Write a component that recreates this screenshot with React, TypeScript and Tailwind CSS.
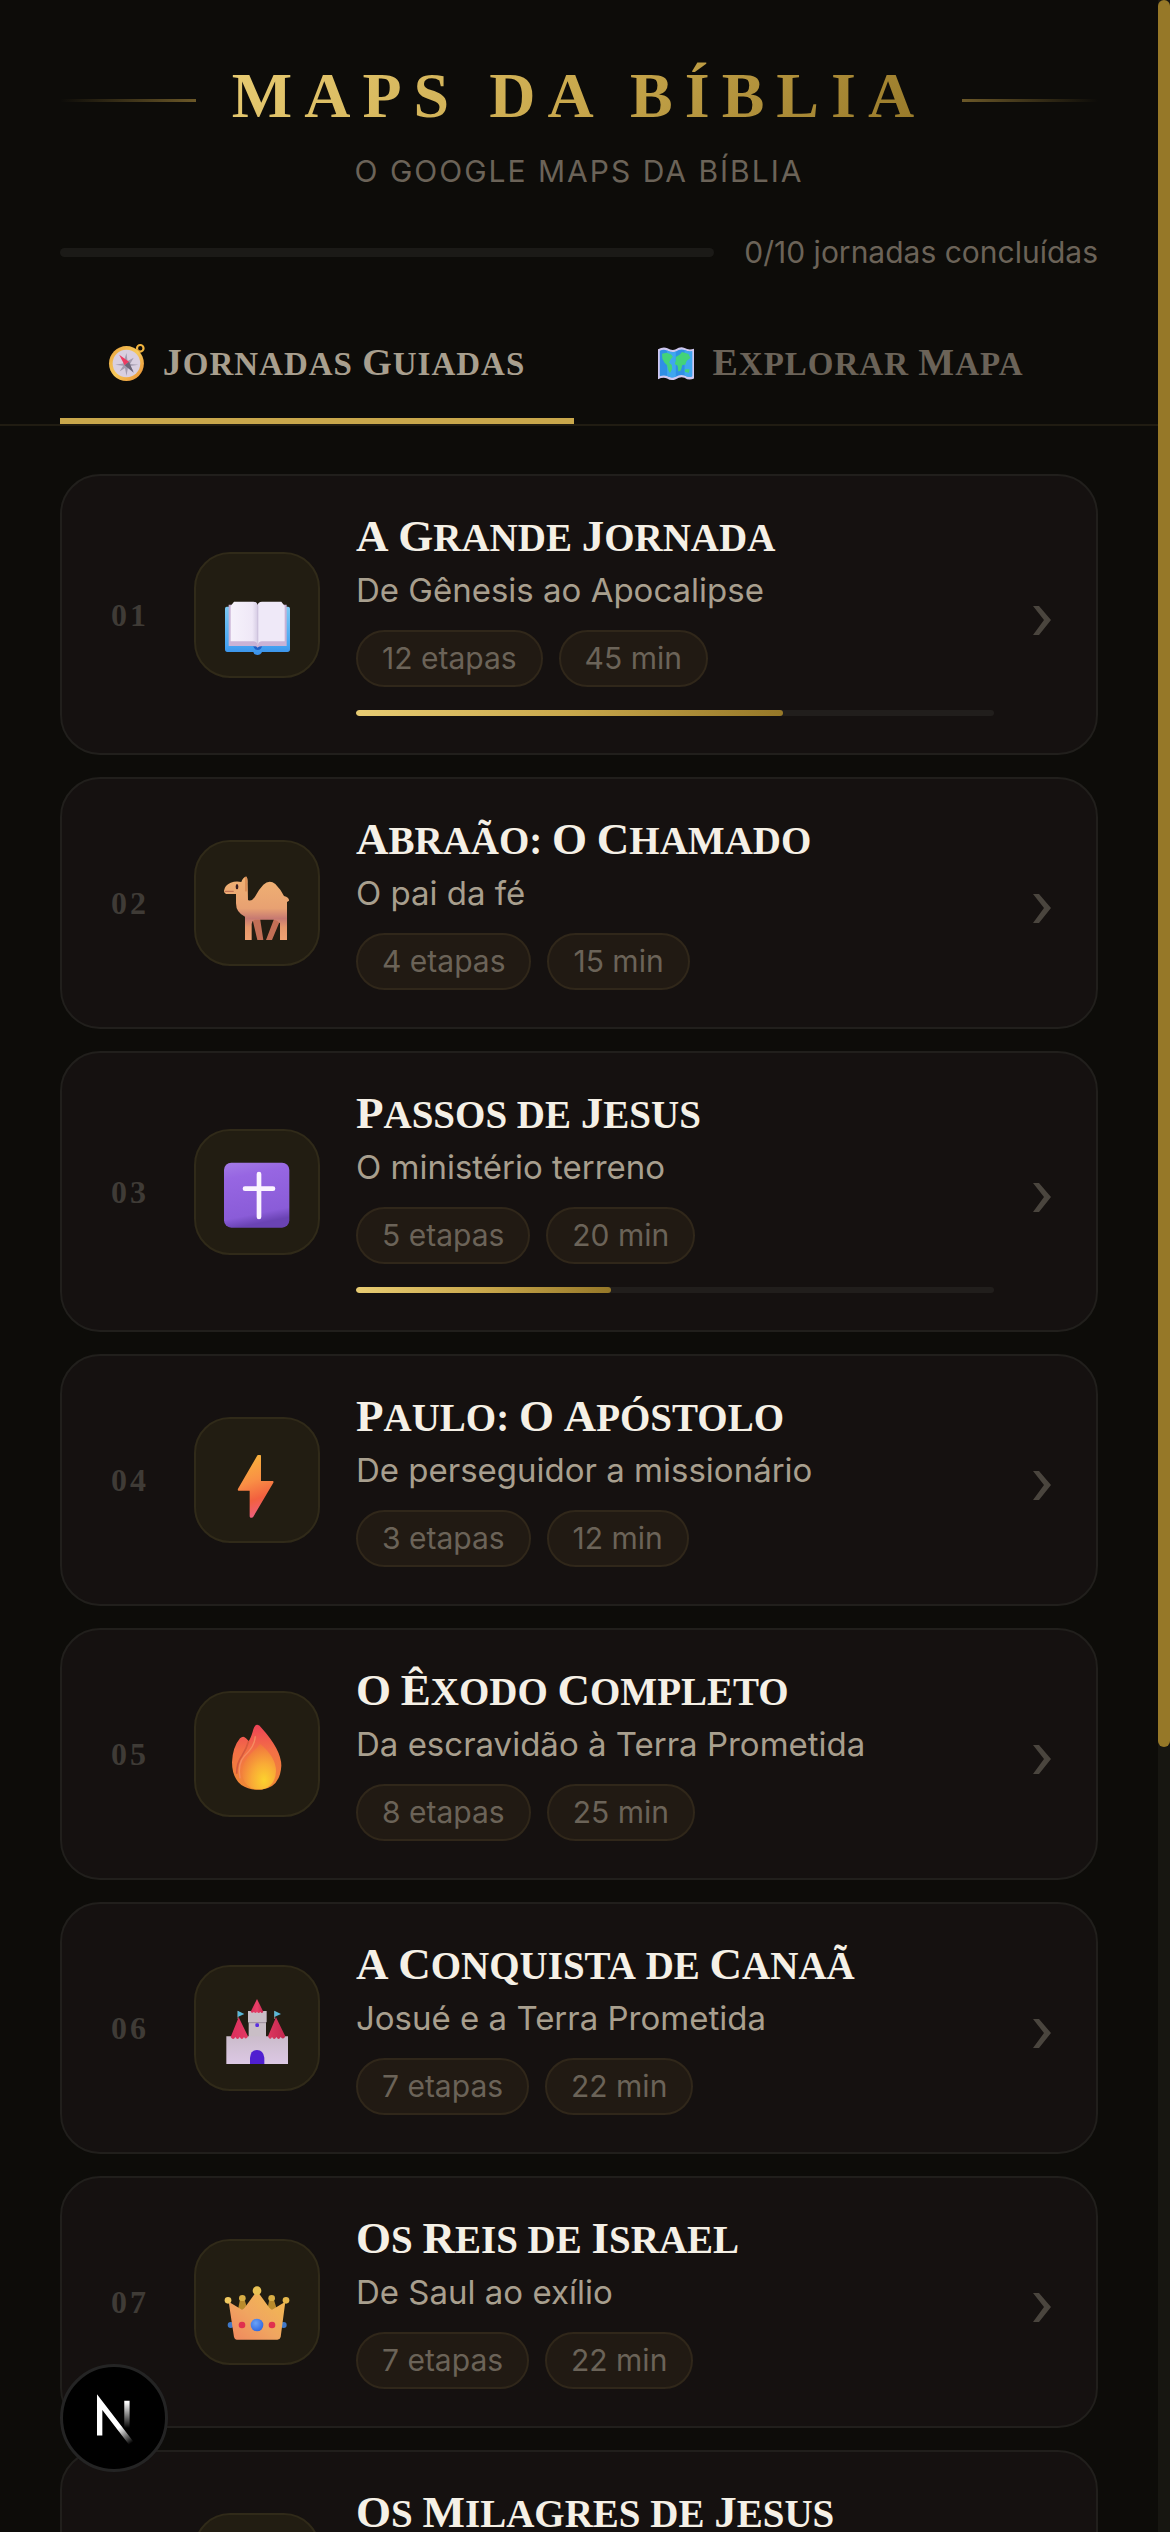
import type { ReactNode } from "react";
import clsx from "clsx";

interface Journey {
  id: number;
  title: string;
  subtitle: string;
  steps: number;
  minutes: number;
  progress?: number;
  icon: ReactNode;
}

function Emoji({ children, small }: { children: ReactNode; small?: boolean }) {
  return (
    <svg
      viewBox="0 0 198 198"
      aria-hidden="true"
      className={clsx("shrink-0 overflow-visible", small ? "size-9" : "size-[66px]")}
    >
      {children}
    </svg>
  );
}

function CompassIcon() {
  return (
    <Emoji small>
      <defs>
        <linearGradient id="compassRim" x1="0" y1="0" x2="1" y2="1">
          <stop offset="0" stopColor="#e9a23c" />
          <stop offset="0.5" stopColor="#f6c95a" />
          <stop offset="1" stopColor="#e8892f" />
        </linearGradient>
      </defs>
      <circle cx="172" cy="18" r="18" fill="none" stroke="#f2b53f" strokeWidth="12" />
      <path d="M134 30l24 24 14-16-16-16z" fill="#d98f2b" />
      <circle cx="96" cy="102" r="96" fill="url(#compassRim)" />
      <circle cx="96" cy="102" r="76" fill="#d9cfe0" />
      <path
        d="M96 44l6 44 34-18-20 34 46 4-46 8 20 30-32-20-8 44-8-44-30 20 20-32-44-6 44-6z"
        fill="#a49cb0"
      />
      <path d="M56 54l54 38-24 20z" fill="#ee3b62" />
      <path d="M136 152l-50-40 24-20z" fill="#6b6577" />
    </Emoji>
  );
}

function MapIcon() {
  return (
    <Emoji small>
      <path
        d="M0 24Q28 8 52 18Q76 34 98 24Q122 6 146 16Q170 30 198 20V184Q170 198 146 180Q122 172 98 188Q72 200 50 184Q28 176 0 188z"
        fill="#cfc8f0"
      />
      <path
        d="M10 32Q30 22 50 30Q76 44 98 36Q122 20 146 28Q168 40 188 34V172Q168 180 146 168Q122 160 98 174Q72 184 50 170Q30 164 10 172z"
        fill="#2f8fe6"
      />
      <path d="M50 30Q76 44 98 36V174Q72 184 50 170z" fill="#3fa6f0" />
      <path d="M146 28Q168 40 188 34V172Q168 180 146 168z" fill="#3fa6f0" />
      <path
        d="M22 48l26-6 24 10 10 12-16 20-4 14 14 12 2 22-12 22-10-16-6-26-14-14-12-22zM98 66l22-14 12-14 36 12 10 22-20 14-8 22-16 2-8 30-14 6-4-32-16-10 6-18zM148 134h26l-4 18-22-4z"
        fill="#43d37a"
      />
    </Emoji>
  );
}

function BookIcon() {
  return (
    <Emoji>
      <defs>
        <linearGradient id="bookCover" x1="0" y1="0" x2="0" y2="1">
          <stop offset="0" stopColor="#7cc8f2" />
          <stop offset="0.8" stopColor="#45a4f2" />
          <stop offset="1" stopColor="#3a8fe8" />
        </linearGradient>
        <linearGradient id="bookPage" x1="0" y1="0" x2="1" y2="0">
          <stop offset="0" stopColor="#f6f2fb" />
          <stop offset="0.8" stopColor="#efe8f7" />
          <stop offset="1" stopColor="#d6cce4" />
        </linearGradient>
      </defs>
      <path
        d="M8 62H192Q198 62 198 68V190Q198 198 190 198H114Q110 207 100 207Q90 207 88 198H10Q3 198 3 190V68Q3 62 8 62z"
        fill="url(#bookCover)"
      />
      <path d="M88 180h26q-2 12-13 12t-13-12z" fill="#1f5fc4" />
      <path d="M14 56h174v124h-72q-12 0-15 5q-3-5-15-5H14z" fill="#c9b3d6" />
      <path d="M30 47H88Q100 47 101 58V178Q99 166 88 166H20V60z" fill="url(#bookPage)" />
      <path d="M172 47H114Q102 47 101 58V178Q103 166 114 166H182V60z" fill="#efe9f8" />
      <path d="M101 58V176" stroke="#cfc4de" strokeWidth="4" />
    </Emoji>
  );
}

function CamelIcon() {
  return (
    <Emoji>
      <defs>
        <linearGradient id="camelBody" x1="0" y1="0" x2="0" y2="1">
          <stop offset="0" stopColor="#f0b273" />
          <stop offset="0.5" stopColor="#e8a172" />
          <stop offset="0.66" stopColor="#c77a72" />
          <stop offset="0.8" stopColor="#e6976b" />
          <stop offset="1" stopColor="#f0a172" />
        </linearGradient>
      </defs>
      <path d="M84 130l16 68h18l-10-66zM152 130l-26 68h18l26-62z" fill="#c26f56" />
      <path
        d="M0 50Q2 34 20 26Q36 20 52 24Q56 10 66 8Q72 10 71 28L72 78Q82 84 92 70Q104 46 118 32Q136 16 154 30Q170 46 180 66Q196 70 195 80L189 84V198H168V148Q160 138 150 137H92Q84 140 83 150V198H63V128Q36 116 36 88V60H12Q0 60 0 50z"
        fill="url(#camelBody)"
      />
      <path d="M4 52h24" stroke="#b8674f" strokeWidth="3" strokeLinecap="round" />
      <ellipse cx="39" cy="38" rx="4" ry="8" fill="#3a1f22" />
      <path d="M66 10V50" stroke="#d98a52" strokeWidth="5" strokeLinecap="round" />
    </Emoji>
  );
}

function CrossIcon() {
  return (
    <Emoji>
      <defs>
        <linearGradient id="crossTile" x1="0" y1="0" x2="0.2" y2="1">
          <stop offset="0" stopColor="#a47be6" />
          <stop offset="0.25" stopColor="#9766e2" />
          <stop offset="0.85" stopColor="#8a5cd8" />
          <stop offset="1" stopColor="#6a43b4" />
        </linearGradient>
      </defs>
      <rect x="0" y="-1" width="196" height="195" rx="22" fill="url(#crossTile)" />
      <path d="M105 33V162M63 77H147" stroke="#fbf4ff" strokeWidth="14" strokeLinecap="round" />
    </Emoji>
  );
}

function BoltIcon() {
  return (
    <Emoji>
      <defs>
        <linearGradient id="bolt" x1="0.4" y1="0" x2="0.6" y2="1">
          <stop offset="0" stopColor="#f8b33c" />
          <stop offset="0.4" stopColor="#f98f45" />
          <stop offset="0.7" stopColor="#f2603f" />
          <stop offset="1" stopColor="#ee5f86" />
        </linearGradient>
      </defs>
      <path
        d="M103 12H109Q111 12 111 15V90H146Q150 91 148 95L88 197Q86 201 80 200Q77 200 77 196V119H44Q40 118 42 113L99 15Q100 12 103 12z"
        fill="url(#bolt)"
      />
    </Emoji>
  );
}

function FireIcon() {
  return (
    <Emoji>
      <defs>
        <linearGradient id="fireOuter" x1="0.5" y1="0" x2="0.5" y2="1">
          <stop offset="0" stopColor="#ee4256" />
          <stop offset="0.4" stopColor="#f37046" />
          <stop offset="1" stopColor="#f08a35" />
        </linearGradient>
        <radialGradient id="fireInner" cx="0.65" cy="0.8" r="0.8">
          <stop offset="0" stopColor="#fcd22e" />
          <stop offset="0.45" stopColor="#f9ab36" />
          <stop offset="1" stopColor="#f0713f" />
        </radialGradient>
      </defs>
      <path
        d="M96 0Q104-4 112 8Q172 74 172 122Q168 188 112 194Q76 196 52 180Q24 158 24 112Q26 66 48 40Q58 30 66 40L74 48Q80 40 86 20Q90 4 96 0z"
        fill="url(#fireOuter)"
      />
      <path d="M74 48Q68 70 54 92Q38 114 38 146" fill="none" stroke="#d65a3e" strokeWidth="5" />
      <path d="M94 34Q92 66 62 92Q40 116 48 160" fill="none" stroke="#f58c62" strokeWidth="4" />
      <path
        d="M108 56Q156 96 156 138Q154 184 116 193H92Q56 182 54 142Q54 110 82 84Q102 66 108 56z"
        fill="url(#fireInner)"
      />
    </Emoji>
  );
}

function CastleIcon() {
  return (
    <Emoji>
      <defs>
        <linearGradient id="castleWall" x1="0" y1="0" x2="0" y2="1">
          <stop offset="0" stopColor="#cbbccb" />
          <stop offset="1" stopColor="#dcc8e4" />
        </linearGradient>
        <linearGradient id="castleRoof" x1="0" y1="0" x2="1" y2="0">
          <stop offset="0" stopColor="#d92f5c" />
          <stop offset="0.5" stopColor="#ea4068" />
          <stop offset="1" stopColor="#c4284f" />
        </linearGradient>
      </defs>
      <path d="M72 36H128V70H126V120H74V70H72z" fill="#c9bec6" />
      <path d="M74 71H126" stroke="#9d8f9c" strokeWidth="3" />
      <path d="M99 0L118 38q-5 8-9 0q-5 8-10 0q-5 8-9 0q-5 6-10 0z" fill="url(#castleRoof)" />
      <rect x="94" y="73" width="11" height="11" rx="4" fill="#5a2ee0" />
      <path d="M42 36V60M152 36V60" stroke="#8a7a72" strokeWidth="3" />
      <path d="M41 35L61 45L41 54zM151 35L171 45L151 54z" fill="#58b8d8" />
      <path d="M7 112H192V195H7z" fill="url(#castleWall)" />
      <path
        d="M44 55L72 112q-6 12-12 2q-6 12-13 0q-6 12-13 0q-6 12-14 0zM156 55L184 112q-6 12-14 2q-6 12-13 0q-6 12-13 0q-6 12-12-2z"
        fill="url(#castleRoof)"
      />
      <path d="M78 195V176Q80 153 99 153Q118 153 121 176V195z" fill="#4f1fd0" />
    </Emoji>
  );
}

function CrownIcon() {
  return (
    <Emoji>
      <defs>
        <linearGradient id="crownGold" x1="0" y1="1" x2="1" y2="0">
          <stop offset="0" stopColor="#f0865e" />
          <stop offset="0.45" stopColor="#f0a560" />
          <stop offset="1" stopColor="#f2bc50" />
        </linearGradient>
        <radialGradient id="crownGem" cx="0.4" cy="0.35" r="0.7">
          <stop offset="0" stopColor="#6aa2f6" />
          <stop offset="1" stopColor="#2f66e0" />
        </radialGradient>
      </defs>
      <circle cx="55" cy="76" r="10" fill="#d9ae45" />
      <circle cx="143" cy="76" r="10" fill="#d9ae45" />
      <path d="M47 84h16l8 26H42zM135 84h16l8 26h-29z" fill="#b98b2c" />
      <circle cx="20" cy="156" r="9" fill="#3f78c8" />
      <circle cx="179" cy="156" r="9" fill="#3f78c8" />
      <path
        d="M14 86L50 108Q56 112 62 104L94 60H104L136 104Q142 112 148 108L184 86L170 192Q168 200 160 200H38Q32 200 30 192z"
        fill="url(#crownGold)"
      />
      <circle cx="12" cy="82" r="10" fill="#f0c860" />
      <circle cx="186" cy="82" r="10" fill="#e6b84c" />
      <circle cx="99" cy="53" r="13" fill="#e9c254" />
      <circle cx="99" cy="156" r="19" fill="url(#crownGem)" />
      <circle cx="54" cy="156" r="10" fill="#e0304e" />
      <circle cx="144" cy="156" r="10" fill="#e0304e" />
    </Emoji>
  );
}

function SparkleIcon() {
  return (
    <Emoji>
      <path d="M99 10l24 65 65 24-65 24-24 65-24-65-65-24 65-24z" fill="#f6c250" />
    </Emoji>
  );
}

const journeys: Journey[] = [
  { id: 1, title: "A Grande Jornada", subtitle: "De Gênesis ao Apocalipse", steps: 12, minutes: 45, progress: 67, icon: <BookIcon /> },
  { id: 2, title: "Abraão: O Chamado", subtitle: "O pai da fé", steps: 4, minutes: 15, icon: <CamelIcon /> },
  { id: 3, title: "Passos de Jesus", subtitle: "O ministério terreno", steps: 5, minutes: 20, progress: 40, icon: <CrossIcon /> },
  { id: 4, title: "Paulo: O Apóstolo", subtitle: "De perseguidor a missionário", steps: 3, minutes: 12, icon: <BoltIcon /> },
  { id: 5, title: "O Êxodo Completo", subtitle: "Da escravidão à Terra Prometida", steps: 8, minutes: 25, icon: <FireIcon /> },
  { id: 6, title: "A Conquista de Canaã", subtitle: "Josué e a Terra Prometida", steps: 7, minutes: 22, icon: <CastleIcon /> },
  { id: 7, title: "Os Reis de Israel", subtitle: "De Saul ao exílio", steps: 7, minutes: 22, icon: <CrownIcon /> },
  { id: 8, title: "Os Milagres de Jesus", subtitle: "Sinais e maravilhas", steps: 6, minutes: 18, icon: <SparkleIcon /> },
];

// Small capitals: every word is upper case, capitalised words get a taller initial.
function SmallCaps({ text, initial }: { text: string; initial: string }) {
  return (
    <>
      {text.split(" ").map((word, i) => (
        <span key={i}>
          {i > 0 && " "}
          <span
            className={clsx(
              "inline-block uppercase",
              word[0] !== word[0].toLowerCase() && initial
            )}
          >
            {word}
          </span>
        </span>
      ))}
    </>
  );
}

function Tab({ label, icon, active }: { label: string; icon: ReactNode; active?: boolean }) {
  return (
    <button
      type="button"
      role="tab"
      aria-selected={!!active}
      className={clsx(
        "flex flex-1 items-center justify-center gap-[18px] border-b-6 pt-8 pb-8 font-['Liberation_Serif',serif] text-[33px] leading-[44px] font-bold tracking-[1px] whitespace-nowrap",
        active ? "border-[#c9a84c] text-[#a89f8e]" : "border-transparent text-[#6b6358]"
      )}
    >
      {icon}
      <span>
        <SmallCaps text={label} initial="first-letter:text-[38px]" />
      </span>
    </button>
  );
}

function Chip({ children }: { children: ReactNode }) {
  return (
    <span className="rounded-full border-2 border-[#30271a] bg-[#211a13] px-6 py-1 text-[30px] leading-[45px] text-[#6b6358]">
      {children}
    </span>
  );
}

function JourneyCard({ journey }: { journey: Journey }) {
  return (
    <button
      type="button"
      className="flex w-full items-center gap-9 rounded-[40px] border-2 border-[#211f1c] bg-[#151110] px-9 py-[37px] text-left"
    >
      <span className="w-[60px] shrink-0 pl-1 text-center font-['Liberation_Serif',serif] text-[32px] font-bold tracking-[3px] text-[#3f3b36]">
        {String(journey.id).padStart(2, "0")}
      </span>
      <span className="flex size-[126px] shrink-0 items-center justify-center rounded-[36px] border-2 border-[#302a19] bg-[#221d12] pt-2">
        {journey.icon}
      </span>
      <span className="flex min-w-0 flex-1 flex-col">
        <span className="font-['Liberation_Serif',serif] text-[39px] leading-[46px] font-bold text-[#f5f0e6]">
          <SmallCaps text={journey.title} initial="first-letter:text-[45px]" />
        </span>
        <span className="mt-1 text-[33px] leading-[50px] text-[#a89f8e]">{journey.subtitle}</span>
        <span className="mt-[15px] flex gap-4">
          <Chip>{journey.steps} etapas</Chip>
          <Chip>{journey.minutes} min</Chip>
        </span>
        {journey.progress && (
          <span className="mt-[23px] h-1.5 overflow-hidden rounded-full bg-[#211e1c]">
            <span
              className="block h-full rounded-full bg-linear-to-r from-[#e8cc73] via-[#c9a84c] to-[#967828]"
              style={{ width: `${journey.progress}%` }}
            />
          </span>
        )}
      </span>
      <svg viewBox="0 0 30 40" aria-hidden="true" className="h-10 w-[30px] shrink-0">
        <path d="M3 11H9L21 25L9 40H3L14 25z" fill="#4a453e" />
      </svg>
    </button>
  );
}

export default function App() {
  return (
    <div className="flex h-screen overflow-hidden bg-[#0d0c09] font-['Inter',sans-serif]">
      <main className="flex-1 overflow-y-auto [scrollbar-width:none]">
        <header className="border-b-2 border-[#201c12] px-[60px] pt-[60px]">
          <div className="flex items-center gap-9">
            <span className="mt-2 h-[3px] flex-1 bg-linear-to-r from-transparent to-[#6b5828]" />
            <h1 className="bg-linear-135 from-[#e8cc73] via-[#c9a84c] to-[#967828] bg-clip-text font-['Liberation_Serif',serif] text-[64px] leading-[72px] font-bold tracking-[12px] text-transparent uppercase">
              Maps da Bíblia
            </h1>
            <span className="mt-2 h-[3px] flex-1 bg-linear-to-l from-transparent to-[#6b5828]" />
          </div>
          <p className="mt-4 text-center text-[30px] leading-[46px] tracking-[2px] text-[#6b6358] uppercase">
            O Google Maps da Bíblia
          </p>
          <div className="mt-9 flex items-center gap-[30px]">
            <div className="h-[9px] flex-1 rounded-full bg-[#1b1a17]" />
            <span className="text-[30px] leading-[44px] text-[#6b6358]">0/10 jornadas concluídas</span>
          </div>
          <div role="tablist" className="mt-[34px] flex gap-2.5">
            <Tab label="Jornadas Guiadas" icon={<CompassIcon />} active />
            <Tab label="Explorar Mapa" icon={<MapIcon />} />
          </div>
        </header>
        <section className="flex flex-col gap-[22px] px-[60px] py-12">
          {journeys.map((journey) => (
            <JourneyCard key={journey.id} journey={journey} />
          ))}
        </section>
      </main>

      <div className="w-3 shrink-0 bg-[#171611]">
        <div className="h-[69%] rounded-full bg-[#967828]" />
      </div>

      <button
        type="button"
        aria-label="Next.js"
        className="fixed bottom-[60px] left-[60px] flex size-[108px] items-center justify-center rounded-full border-3 border-[#242424] bg-black"
      >
        <svg viewBox="0.5 -1.5 14 16" fill="none" className="h-[46px] w-[41px] overflow-visible">
          <defs>
            <linearGradient id="nextDiagonal" x1="9" y1="10" x2="13" y2="15.500" gradientUnits="userSpaceOnUse">
              <stop stopColor="#fff" />
              <stop offset="1" stopColor="#fff" stopOpacity="0" />
            </linearGradient>
            <linearGradient id="nextStem" x1="12" y1="1" x2="12" y2="10" gradientUnits="userSpaceOnUse">
              <stop stopColor="#fff" />
              <stop offset="1" stopColor="#fff" stopOpacity="0" />
            </linearGradient>
          </defs>
          <path d="M13.300 15.200L2.340 1V12.600" stroke="url(#nextDiagonal)" strokeWidth="1.860" />
          <path d="M11.825 0.500V13.100" stroke="url(#nextStem)" strokeWidth="1.860" />
        </svg>
      </button>
    </div>
  );
}
